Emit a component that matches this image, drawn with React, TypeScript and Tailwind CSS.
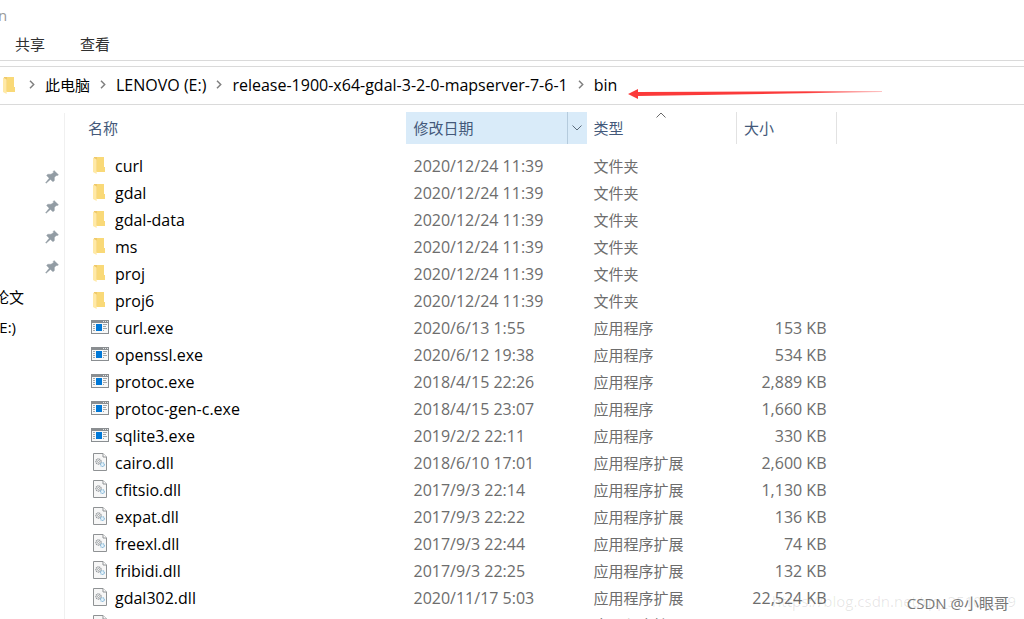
import type { ReactNode } from 'react'

type Kind = 'folder' | 'exe' | 'dll'

interface FileEntry {
  name: string
  modified: string
  kind: Kind
  size?: string
}

const KIND_LABEL: Record<Kind, string> = {
  folder: '文件夹',
  exe: '应用程序',
  dll: '应用程序扩展',
}

const files: FileEntry[] = [
  { name: 'curl', modified: '2020/12/24 11:39', kind: 'folder' },
  { name: 'gdal', modified: '2020/12/24 11:39', kind: 'folder' },
  { name: 'gdal-data', modified: '2020/12/24 11:39', kind: 'folder' },
  { name: 'ms', modified: '2020/12/24 11:39', kind: 'folder' },
  { name: 'proj', modified: '2020/12/24 11:39', kind: 'folder' },
  { name: 'proj6', modified: '2020/12/24 11:39', kind: 'folder' },
  { name: 'curl.exe', modified: '2020/6/13 1:55', kind: 'exe', size: '153 KB' },
  { name: 'openssl.exe', modified: '2020/6/12 19:38', kind: 'exe', size: '534 KB' },
  { name: 'protoc.exe', modified: '2018/4/15 22:26', kind: 'exe', size: '2,889 KB' },
  { name: 'protoc-gen-c.exe', modified: '2018/4/15 23:07', kind: 'exe', size: '1,660 KB' },
  { name: 'sqlite3.exe', modified: '2019/2/2 22:11', kind: 'exe', size: '330 KB' },
  { name: 'cairo.dll', modified: '2018/6/10 17:01', kind: 'dll', size: '2,600 KB' },
  { name: 'cfitsio.dll', modified: '2017/9/3 22:14', kind: 'dll', size: '1,130 KB' },
  { name: 'expat.dll', modified: '2017/9/3 22:22', kind: 'dll', size: '136 KB' },
  { name: 'freexl.dll', modified: '2017/9/3 22:44', kind: 'dll', size: '74 KB' },
  { name: 'fribidi.dll', modified: '2017/9/3 22:25', kind: 'dll', size: '132 KB' },
  { name: 'gdal302.dll', modified: '2020/11/17 5:03', kind: 'dll', size: '22,524 KB' },
]

const crumbs = ['LENOVO (E:)', 'release-1900-x64-gdal-3-2-0-mapserver-7-6-1', 'bin']

function FolderIcon() {
  return (
    <svg width="14" height="18" viewBox="0 -1 14 18" aria-hidden="true">
      <path d="M1 0H11V10H12V15H3L1 14Z" fill="#f9d978" />
      <path d="M1 0H4V14H1Z" fill="#efc96a" />
      <path d="M0 0.5L3.6 2.6V17L0 15Z" fill="#ffe9a6" />
    </svg>
  )
}

function ExeIcon() {
  return (
    <svg width="18" height="14" viewBox="0 0 18 14" shapeRendering="crispEdges" aria-hidden="true">
      <path d="M0 0H18V14H0Z" fill="#8a8e91" />
      <path d="M1 3H17V13H1Z" fill="#f7f8f8" />
      <path d="M12 1h1v1h-1zM14 1h1v1h-1zM16 1h1v1h-1z" fill="#e4e6e7" />
      <path d="M2 4h2v1H2zM2 6h2v1H2zM2 8h2v1H2zM2 10h2v1H2zM12 4h4v1h-4zM12 6h3v1h-3zM12 8h4v1h-4zM12 10h1v1h-1z" fill="#a3a7aa" />
      <path d="M5 4H11V11H5Z" fill="#0078d7" />
    </svg>
  )
}

function DllIcon() {
  return (
    <svg width="14" height="18" viewBox="0 0 14 18" aria-hidden="true">
      <path d="M0.5 0.5H10L13.5 4V17.5H0.5Z" fill="#f7f7f7" stroke="#8f9294" />
      <path d="M10 0.5V4H13.5" fill="#fff" stroke="#8f9294" />
      <circle cx="5.5" cy="8.5" r="2.6" fill="none" stroke="#8a8f93" strokeWidth="1.2" strokeDasharray="1.2 0.6" />
      <circle cx="5.5" cy="8.5" r="1" fill="none" stroke="#8a8f93" strokeWidth="0.7" />
      <circle cx="9.4" cy="11.6" r="1.9" fill="#e6f3fb" stroke="#7fb3d5" strokeWidth="1.1" strokeDasharray="1.2 0.5" />
    </svg>
  )
}

function PinIcon() {
  return (
    <svg width="14" height="14" viewBox="0 0 14 14" aria-hidden="true">
      <path d="M9 0.5L13.5 4.8L12 5.8L11.2 5.4L9.4 7.6L9.4 10.6L8 11.8L5.4 9.4L1.2 13.2L0.6 12.8L4.2 8.2L1.6 5.6L2.8 4.2L6 4.2L8.6 2.4L8.2 1.4Z" fill="#929ca4" stroke="#929ca4" strokeWidth="0.4" />
    </svg>
  )
}

function Chevron() {
  return (
    <svg width="6" height="9" viewBox="0 0 6 9" aria-hidden="true">
      <path d="M1 0.8L4.7 4.5L1 8.2" fill="none" stroke="#808080" strokeWidth="1.5" />
    </svg>
  )
}

function KindIcon({ kind }: { kind: Kind }) {
  if (kind === 'folder') return <FolderIcon />
  if (kind === 'exe') return <ExeIcon />
  return <DllIcon />
}

function NameCell({ kind, children }: { kind: Kind; children?: ReactNode }) {
  return (
    <td className="p-0 text-black">
      <div className="flex h-[27px] items-center">
        <span className="flex w-[29px] shrink-0 justify-center pr-px pb-0.5">
          <KindIcon kind={kind} />
        </span>
        {children}
      </div>
    </td>
  )
}

function FileTable() {
  return (
    <table className="w-[751px] table-fixed border-collapse text-left">
      <colgroup>
        <col />
        <col className="w-[181px]" />
        <col className="w-[150px]" />
        <col className="w-[100px]" />
      </colgroup>
      <thead className="text-[15px] text-[#44597a]">
        <tr className="h-8">
          <th className="p-0 pl-0.5 font-normal">名称</th>
          <th className="bg-[#d9ebf9] p-0 font-normal">
            <div className="flex h-8 items-center justify-between pl-2">
              修改日期
              <button className="flex h-8 w-5 items-center justify-center border-l border-[#b5cbdd]" aria-label="筛选">
                <svg width="10" height="6" viewBox="0 0 10 6" aria-hidden="true">
                  <path d="M0.5 0.5L5 5L9.5 0.5" fill="none" stroke="#5b6b7b" />
                </svg>
              </button>
            </div>
          </th>
          <th className="relative border-r border-[#e2e2e2] p-0 pl-[7px] font-normal">
            类型
            <svg className="absolute top-0 left-1/2 -translate-x-1/2" width="10" height="6" viewBox="0 0 10 6" aria-hidden="true">
              <path d="M0.5 5.5L5 1L9.5 5.5" fill="none" stroke="#6a6a6a" />
            </svg>
          </th>
          <th className="border-r border-[#e2e2e2] p-0 pl-[7px] font-normal">大小</th>
        </tr>
      </thead>
      <tbody className="text-[#6d6d6d]">
        <tr className="h-2" aria-hidden="true" />
        {files.map((f) => (
          <tr key={f.name} className="h-[27px]">
            <NameCell kind={f.kind}>{f.name}</NameCell>
            <td className="p-0 pl-2">{f.modified}</td>
            <td className="p-0 pl-[7px] text-[15px]">{KIND_LABEL[f.kind]}</td>
            <td className="p-0 pr-[10px] text-right">{f.size}</td>
          </tr>
        ))}
        <tr className="h-[27px]">
          <NameCell kind="dll" />
          <td />
          <td className="p-0 pl-[7px] text-[15px]">{KIND_LABEL.dll}</td>
        </tr>
      </tbody>
    </table>
  )
}

function Sidebar() {
  return (
    <nav className="mt-2 flex w-[65px] shrink-0 flex-col border-r border-[#f0f0f0] pt-[49px] text-[15px] text-black">
      {[0, 1, 2, 3].map((i) => (
        <div key={i} className="flex h-[30px] items-center justify-end pr-[5px]">
          <PinIcon />
        </div>
      ))}
      <a href="#" className="flex h-[30px] items-center justify-end overflow-hidden pr-10 whitespace-nowrap">
        论文
      </a>
      <a href="#" className="flex h-[30px] items-center justify-end overflow-hidden pr-12 whitespace-nowrap">
        (E:)
      </a>
    </nav>
  )
}

export default function App() {
  return (
    <div className="relative flex h-screen flex-col overflow-hidden bg-white font-['Open_Sans','Noto_Sans_CJK_SC',sans-serif] text-base leading-5">
      <header className="flex h-[61px] shrink-0 flex-col border-b border-[#dadada] text-[15px]">
        <div className="flex h-[29px] items-center overflow-hidden text-[#999]">
          <span className="-ml-0.5">n</span>
        </div>
        <div className="flex h-[30px] items-center gap-[35px] pl-[15px] text-[#303030]">
          <button>共享</button>
          <button>查看</button>
        </div>
      </header>

      {/* Address bar */}
      <div className="relative mt-[5px] flex h-[39px] shrink-0 items-center border-y border-[#dadada] pb-0.5 pl-[3px] text-black">
        <FolderIcon />
        <ol className="flex items-center pl-3">
          <li className="flex items-center text-[15px]">
            <Chevron />
            <a href="#" className="px-[10px] whitespace-nowrap">
              此电脑
            </a>
          </li>
          {crumbs.map((c) => (
            <li key={c} className="flex items-center">
              <Chevron />
              <a href="#" className="px-[10px] whitespace-nowrap">
                {c}
              </a>
            </li>
          ))}
        </ol>
        <svg className="absolute top-[22px] left-[628px]" width="256" height="11" viewBox="0 0 256 11" aria-hidden="true">
          <defs>
            <linearGradient id="tail" x1="0" x2="1">
              <stop offset="0.7" stopColor="#fb3a3a" />
              <stop offset="1" stopColor="#fb3a3a" stopOpacity="0.3" />
            </linearGradient>
          </defs>
          <path d="M0 5L10 0V3L254 2V3L160 4.5L10 7V10Z" fill="url(#tail)" />
        </svg>
      </div>

      <main className="flex min-h-0 flex-1">
        <Sidebar />
        <div className="flex-1 overflow-hidden pt-[7px] pl-[21px]">
          <FileTable />
        </div>
      </main>

      <span className="absolute right-2 bottom-2 text-[15px] text-black/10">https://blog.csdn.net/qq_35100009</span>
      <span className="absolute right-[15px] bottom-1.5 text-[15px] text-[#777]">CSDN @小眼哥</span>
    </div>
  )
}
